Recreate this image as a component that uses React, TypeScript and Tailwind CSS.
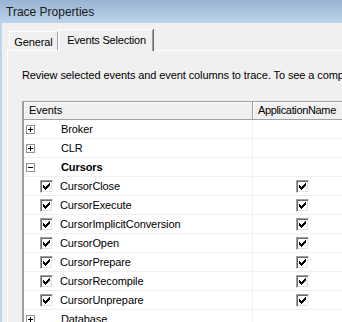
import React from "react";

type TRow =
  | { kind: "group"; label: string; open: boolean }
  | { kind: "event"; label: string; checked: boolean };

const rows: TRow[] = [
  { kind: "group", label: "Broker", open: false },
  { kind: "group", label: "CLR", open: false },
  { kind: "group", label: "Cursors", open: true },
  { kind: "event", label: "CursorClose", checked: true },
  { kind: "event", label: "CursorExecute", checked: true },
  { kind: "event", label: "CursorImplicitConversion", checked: true },
  { kind: "event", label: "CursorOpen", checked: true },
  { kind: "event", label: "CursorPrepare", checked: true },
  { kind: "event", label: "CursorRecompile", checked: true },
  { kind: "event", label: "CursorUnprepare", checked: true },
  { kind: "group", label: "Database", open: false },
];

function ExpandBox({ open }: { open: boolean }) {
  return (
    <span className="flex h-[9px] w-[9px] shrink-0 items-center justify-center border border-[#919191] bg-white">
      <svg width="7" height="7" viewBox="0 0 7 7" shapeRendering="crispEdges">
        <rect x="1" y="3" width="5" height="1" fill="#000" />
        {open ? null : <rect x="3" y="1" width="1" height="5" fill="#000" />}
      </svg>
    </span>
  );
}

function CheckBox({ checked }: { checked: boolean }) {
  return (
    <span className="flex h-[13px] w-[13px] shrink-0 items-center justify-center border border-t-[#a0a0a0] border-l-[#a0a0a0] border-r-[#ffffff] border-b-[#ffffff] bg-white shadow-[inset_1px_1px_0_#696969,inset_-1px_-1px_0_#e3e3e3]">
      {checked ? (
        <svg width="7" height="7" viewBox="0 0 7 7" shapeRendering="crispEdges">
          <rect x="6" y="0" width="1" height="3" fill="#000" />
          <rect x="5" y="1" width="1" height="3" fill="#000" />
          <rect x="4" y="2" width="1" height="3" fill="#000" />
          <rect x="3" y="3" width="1" height="3" fill="#000" />
          <rect x="2" y="4" width="1" height="3" fill="#000" />
          <rect x="1" y="3" width="1" height="3" fill="#000" />
          <rect x="0" y="2" width="1" height="3" fill="#000" />
        </svg>
      ) : null}
    </span>
  );
}

export default function App() {
  return (
    <div
      className="flex h-[322px] w-[342px] flex-col overflow-hidden bg-[#f0f0f0] text-[11px] tracking-[-0.1px] text-black"
      style={{ fontFamily: '"Liberation Sans", Arial, sans-serif' }}
    >
      <div className="flex h-[23px] shrink-0 items-center bg-gradient-to-b from-[#98b3d2] to-[#bed4eb] pl-[6px] text-[12px] tracking-normal text-[#1a1a1a]">
        Trace Properties
      </div>

      <div className="flex flex-1 flex-col border-l-2 border-[#bed4eb]">
        <div className="flex h-[27px] shrink-0 items-end pl-[7px] pt-[5px]">
          <div className="flex h-[19px] w-[49px] items-center justify-center border border-b-0 border-t-white border-l-white border-r-[#a0a0a0] pt-[2px]">
            General
          </div>
          <div className="relative z-10 -mb-px flex h-[22px] w-[95px] items-center justify-center border-l border-t border-white bg-[#f0f0f0] pl-px tracking-[-0.2px] shadow-[inset_-1px_0_0_#a0a0a0,1px_0_0_#696969]">
            Events Selection
          </div>
        </div>

        <div className="ml-[5px] flex flex-1 flex-col border-l border-t border-white pl-[14px]">
          <div className="flex h-[50px] shrink-0 items-center whitespace-nowrap pb-[1px]">
            Review selected events and event columns to trace. To see a complete list, select the "Show all events" and "Show all columns" options.
          </div>

          <div className="flex flex-1 flex-col border-l-2 border-t border-l-[#a0a0a0] border-t-[#a0a0a0] bg-white">
            <div className="flex h-[18px] shrink-0 border-b border-[#a0a0a0] bg-[#f0f0f0]">
              <div className="flex w-[229px] shrink-0 items-center border-r border-[#a0a0a0] pl-[5px] shadow-[inset_1px_1px_0_#fff]">
                Events
              </div>
              <div className="flex w-[140px] shrink-0 items-center whitespace-nowrap pl-[5px] tracking-[-0.35px] shadow-[inset_1px_1px_0_#fff]">
                ApplicationName
              </div>
            </div>

            {rows.map((row) => (
              <div key={row.label} className="flex h-[19px] shrink-0 border-b border-[#efefef]">
                <div className="flex w-[229px] shrink-0 items-center border-r border-[#efefef] pl-[2px]">
                  {row.kind === "group" ? (
                    <>
                      <ExpandBox open={row.open} />
                      <span className={`ml-[26px] ${row.open ? "font-bold" : ""}`}>{row.label}</span>
                    </>
                  ) : (
                    <>
                      <span className="w-[14px] shrink-0" />
                      <CheckBox checked={row.checked} />
                      <span className="ml-[7px] whitespace-nowrap">{row.label}</span>
                    </>
                  )}
                </div>
                <div className="flex w-[140px] shrink-0 items-center pl-[43px]">
                  {row.kind === "event" ? <CheckBox checked={row.checked} /> : null}
                </div>
              </div>
            ))}
          </div>
        </div>
      </div>
    </div>
  );
}
